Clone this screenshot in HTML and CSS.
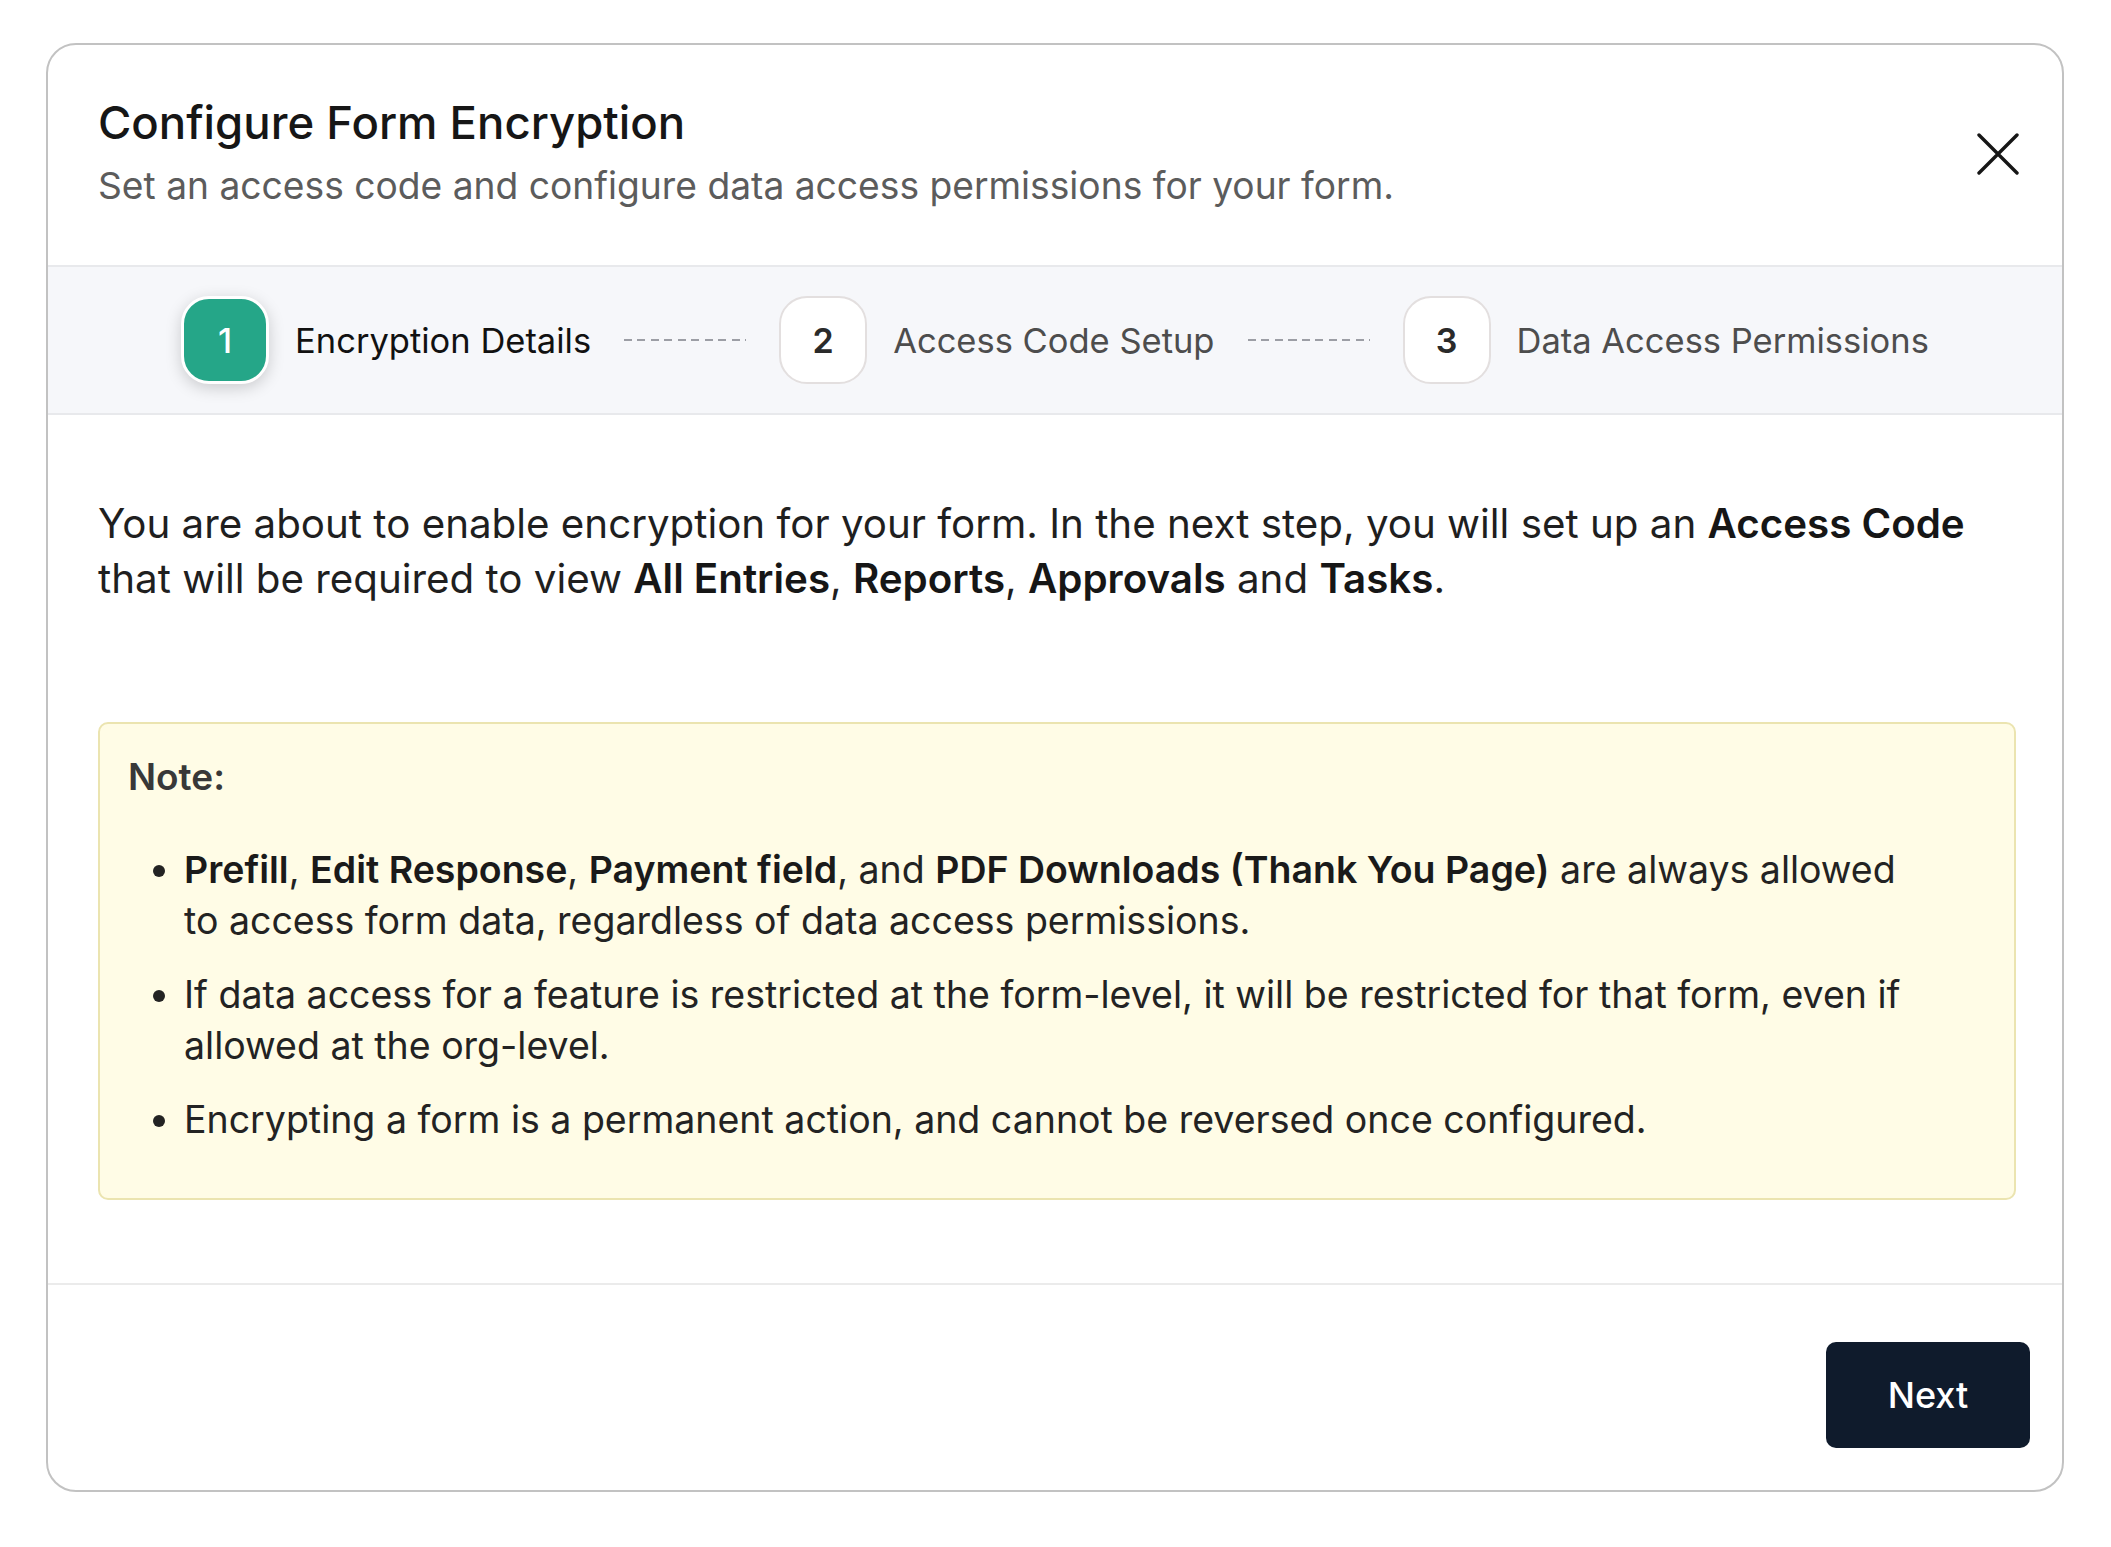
FILE: index.html
```html
<!DOCTYPE html>
<html lang="en">
<head>
    <meta charset="UTF-8">
    <title>Configure Form Encryption</title>
    <link rel="stylesheet" href="styles.css">
</head>
<body>
    <div class="modal">
        <div class="modal-header">
            <div class="heading">
                <h2 class="title">Configure Form Encryption</h2>
                <p class="subtitle">Set an access code and configure data access permissions for your form.</p>
            </div>
            <button class="close" type="button" aria-label="Close">
                <svg width="44" height="42" viewBox="0 0 44 42">
                    <path d="M3 2 L41 40 M41 2 L3 40" stroke="#161616" stroke-width="3.4" stroke-linecap="round"/>
                </svg>
            </button>
        </div>

        <div class="steps">
            <div class="step active">
                <span class="step-num">1</span>
                <span class="step-label">Encryption Details</span>
            </div>
            <span class="step-line"></span>
            <div class="step">
                <span class="step-num">2</span>
                <span class="step-label">Access Code Setup</span>
            </div>
            <span class="step-line"></span>
            <div class="step">
                <span class="step-num">3</span>
                <span class="step-label">Data Access Permissions</span>
            </div>
        </div>

        <div class="modal-body">
            <p class="intro">You are about to enable encryption for your form. In the next step, you will set up an <b>Access Code</b> that will be required to view <b>All Entries</b>, <b>Reports</b>, <b>Approvals</b> and <b>Tasks</b>.</p>

            <div class="note">
                <div class="note-title">Note:</div>
                <ul class="note-list">
                    <li><b>Prefill</b>, <b>Edit Response</b>, <b>Payment field</b>, and <b>PDF Downloads (Thank You Page)</b> are always allowed to access form data, regardless of data access permissions.</li>
                    <li>If data access for a feature is restricted at the form-level, it will be restricted for that form, even if allowed at the org-level.</li>
                    <li>Encrypting a form is a permanent action, and cannot be reversed once configured.</li>
                </ul>
            </div>
        </div>

        <div class="modal-footer">
            <button class="btn-next" type="button">Next</button>
        </div>
    </div>
</body>
</html>
```

FILE: styles.css
```css
/* reset */
* {
    box-sizing: border-box;
}
body {
    margin: 0;
    background: #fff;
    font-family: Inter, "Noto Sans", "Liberation Sans", sans-serif;
    color: #1c1c1c;
}
h2, p, ul, li {
    margin: 0;
    padding: 0;
}
button {
    font-family: inherit;
    border: none;
    background: none;
    padding: 0;
    cursor: pointer;
}

/* modal shell */
.modal {
    margin: 43px 0 0 46px;
    width: 2018px;
    border: 2px solid #c2c2c2;
    border-radius: 30px;
    background: #fff;
    overflow: hidden;
}

/* header */
.modal-header {
    display: flex;
    justify-content: space-between;
    align-items: flex-start;
    padding: 51px 42px 54px 50px;
}
.title {
    font-size: 45.5px;
    line-height: 54px;
    font-weight: 500;
    color: #161616;
}
.subtitle {
    margin-top: 11px;
    font-size: 37.2px;
    line-height: 50px;
    color: #5c5c5c;
}
.close {
    flex-shrink: 0;
    margin-top: 37px;
    width: 44px;
    height: 42px;
}

/* stepper */
.steps {
    display: flex;
    justify-content: center;
    align-items: center;
    padding: 29px 0;
    background: #f6f7fa;
    border-top: 2px solid #e8e9ec;
    border-bottom: 2px solid #e8e9ec;
}
.step {
    display: flex;
    align-items: center;
    gap: 26px;
}
.step-num {
    flex-shrink: 0;
    display: flex;
    justify-content: center;
    align-items: center;
    width: 88px;
    height: 88px;
    border: 2px solid #e3dfdf;
    border-radius: 28px;
    background: #fff;
    font-size: 34px;
    font-weight: 600;
    color: #2a2a2a;
}
.step.active .step-num {
    border: 3px solid #fff;
    background: #25a688;
    color: #fff;
    font-weight: 500;
    box-shadow: 0 4px 16px rgba(0, 0, 0, 0.18);
}
.step-label {
    font-size: 34.5px;
    color: #4d4d4d;
}
.step.active .step-label {
    color: #111;
}
.step-line {
    flex-shrink: 0;
    width: 122px;
    height: 2px;
    margin: 0 33px;
    background: repeating-linear-gradient(90deg, #9c9ea5 0 8px, transparent 8px 13.5px);
}

/* body */
.modal-body {
    padding: 81px 46px 83px 50px;
}
.intro {
    font-size: 40.3px;
    line-height: 55px;
    color: #1f1f1f;
}
.intro b {
    font-weight: 600;
    color: #161616;
}
.note {
    margin-top: 116px;
    padding: 28px 30px 53px 28px;
    background: #fffce6;
    border: 2px solid #ebe4b0;
    border-radius: 10px;
}
.note-title {
    font-size: 37px;
    line-height: 50px;
    font-weight: 600;
    color: #383838;
}
.note-list {
    margin-top: 42px;
    padding: 0 66px 0 56px;
    list-style: disc;
}
.note-list li {
    font-size: 37.5px;
    line-height: 51px;
    color: #232323;
}
.note-list li + li {
    margin-top: 23px;
}
.note-list b {
    font-weight: 600;
    color: #1a1a1a;
}

/* footer */
.modal-footer {
    display: flex;
    justify-content: flex-end;
    padding: 57px 32px 42px;
    border-top: 2px solid #ebebeb;
}
.btn-next {
    width: 204px;
    height: 106px;
    border-radius: 10px;
    background: #0f1b2c;
    color: #fff;
    font-size: 36px;
    font-weight: 500;
}
```
